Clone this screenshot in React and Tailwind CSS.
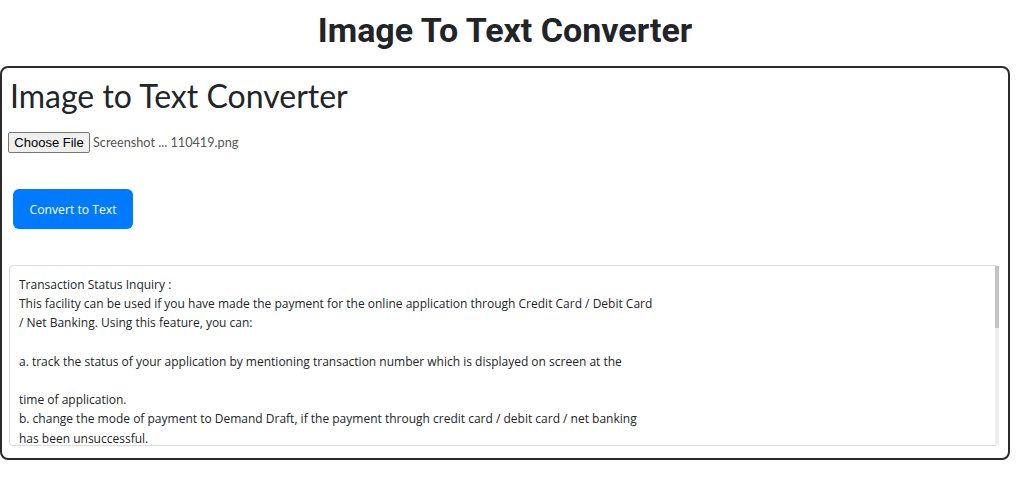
export default function App() {
  // OCR output, trailing blank lines keep the box scrollable like the original
  const ocrText =
    `Transaction Status Inquiry :
This facility can be used if you have made the payment for the online application through Credit Card / Debit Card
/ Net Banking. Using this feature, you can:

a. track the status of your application by mentioning transaction number which is displayed on screen at the

time of application.
b. change the mode of payment to Demand Draft, if the payment through credit card / debit card / net banking
has been unsuccessful.` + "\n".repeat(18);

  return (
    <div className="bg-white min-h-screen mr-[14px]">
      {/* TITLE */}
      <h1 className="text-center text-[34px] font-bold text-[#212529] pt-[7px] pb-[13px] leading-[46px] font-['Roboto',sans-serif]">
        Image To Text Converter
      </h1>

      {/* CARD */}
      <div className="border-2 border-[#2b2b2b] rounded-[8px] px-[7px] pt-[8px] pb-[11px] h-[394px]">
        <h2 className="text-[32px] leading-[40px] text-[#212529] font-['Lato',sans-serif] pl-[1px]">
          Image to Text Converter
        </h2>

        {/* FILE INPUT */}
        <div className="flex items-center mt-[16px] font-['Liberation_Sans',Arial,sans-serif] text-[13px]">
          <span className="h-[21px] w-[82px] -ml-[1px] flex items-center justify-center bg-[#efefef] border border-[#767676] rounded-[2px] text-black">
            Choose File
          </span>
          <span className="ml-[3px] text-[#555] font-['Lato',sans-serif] text-[12.7px]">
            Screenshot ... 110419.png
          </span>
        </div>

        <button className="mt-[36px] ml-[4px] w-[120px] h-[40px] pt-[2px] rounded-[6px] bg-[#007bff] text-white text-[12.2px] font-['Open_Sans',sans-serif]">
          Convert to Text
        </button>

        {/* OUTPUT */}
        <div className="relative mt-[36px] w-[990px]">
          <textarea
            readOnly
            value={ocrText}
            className="block w-full h-[181px] border border-[#dcdcdc] rounded-[4px] pl-[9px] pr-[6px] py-[9px] text-[12px] leading-[19.2px] text-[#212529] font-['Open_Sans',sans-serif] resize-none outline-none overflow-y-auto"
          />
          {/* scrollbar */}
          <div className="absolute right-0 top-[1px] bottom-[1px] w-[4px] bg-[#eeeeee]">
            <div className="h-[62px] bg-[#c4c4c4]" />
          </div>
        </div>
      </div>
    </div>
  );
}
